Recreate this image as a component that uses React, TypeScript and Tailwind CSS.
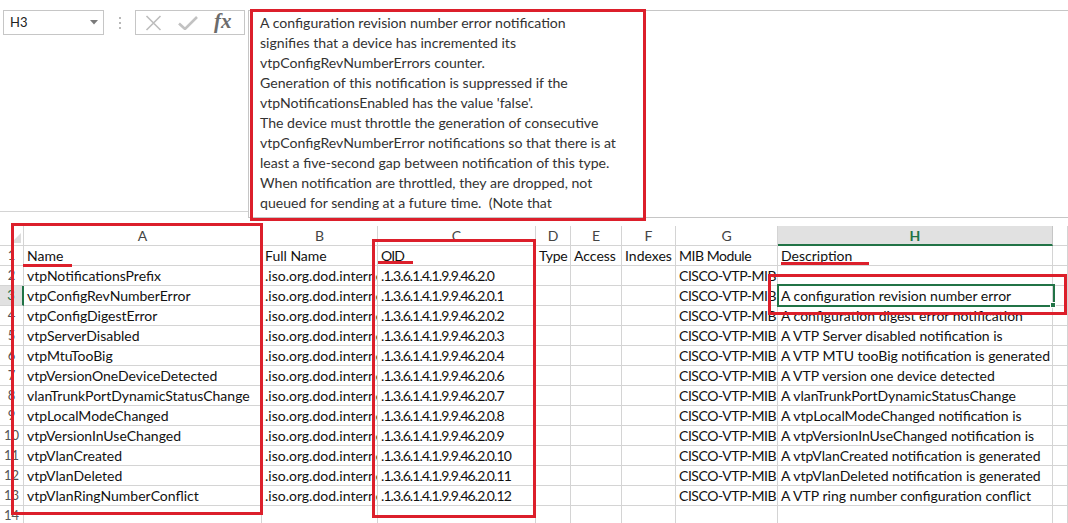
const font = "font-['Lato','Liberation_Sans',sans-serif]";

const cols = [
  { key: 'A', w: 'w-[238px]', extra: '' },
  { key: 'B', w: 'w-[116px]', extra: '' },
  { key: 'C', w: 'w-[158px]', extra: 'tracking-[-0.9px]' },
  { key: 'D', w: 'w-[35px]', extra: 'tracking-[-0.3px]' },
  { key: 'E', w: 'w-[51px]', extra: '' },
  { key: 'F', w: 'w-[54px]', extra: '' },
  { key: 'G', w: 'w-[102px]', extra: 'tracking-[-0.45px]' },
  { key: 'H', w: 'w-[275px]', extra: '' },
  { key: 'I', w: 'flex-1', extra: '' },
];

const header = ['Name', 'Full Name', 'OID', 'Type', 'Access', 'Indexes', 'MIB Module', 'Description', ''];

const data: [string, string, string][] = [
  ['vtpNotificationsPrefix', '.1.3.6.1.4.1.9.9.46.2.0', ''],
  ['vtpConfigRevNumberError', '.1.3.6.1.4.1.9.9.46.2.0.1', 'A configuration revision number error'],
  ['vtpConfigDigestError', '.1.3.6.1.4.1.9.9.46.2.0.2', 'A configuration digest error notification'],
  ['vtpServerDisabled', '.1.3.6.1.4.1.9.9.46.2.0.3', 'A VTP Server disabled notification is'],
  ['vtpMtuTooBig', '.1.3.6.1.4.1.9.9.46.2.0.4', 'A VTP MTU tooBig notification is generated'],
  ['vtpVersionOneDeviceDetected', '.1.3.6.1.4.1.9.9.46.2.0.6', 'A VTP version one device detected'],
  ['vlanTrunkPortDynamicStatusChange', '.1.3.6.1.4.1.9.9.46.2.0.7', 'A vlanTrunkPortDynamicStatusChange'],
  ['vtpLocalModeChanged', '.1.3.6.1.4.1.9.9.46.2.0.8', 'A vtpLocalModeChanged notification is'],
  ['vtpVersionInUseChanged', '.1.3.6.1.4.1.9.9.46.2.0.9', 'A vtpVersionInUseChanged notification is'],
  ['vtpVlanCreated', '.1.3.6.1.4.1.9.9.46.2.0.10', 'A vtpVlanCreated notification is generated'],
  ['vtpVlanDeleted', '.1.3.6.1.4.1.9.9.46.2.0.11', 'A vtpVlanDeleted notification is generated'],
  ['vtpVlanRingNumberConflict', '.1.3.6.1.4.1.9.9.46.2.0.12', 'A VTP ring number configuration conflict'],
];

const formulaLines = [
  'A configuration revision number error notification',
  'signifies that a device has incremented its',
  'vtpConfigRevNumberErrors counter.',
  'Generation of this notification is suppressed if the',
  "vtpNotificationsEnabled has the value 'false'.",
  'The device must throttle the generation of consecutive',
  'vtpConfigRevNumberError notifications so that there is at',
  'least a five-second gap between notification of this type.',
  'When notification are throttled, they are dropped, not',
  'queued for sending at a future time.  (Note that',
];

function Row({ num, cells }: { num: number; cells: string[] }) {
  const active = num === 3;
  return (
    <div className="flex h-[20px]">
      <div
        className={`w-[24px] shrink-0 flex items-center justify-center text-[13px] border-b border-[#d4d4d4] ${
          active
            ? 'bg-[#e1e1e1] text-[#217346] border-r-2 border-r-[#217346]'
            : 'bg-white text-[#555] border-r border-r-[#d4d4d4]'
        }`}
      >
        {num}
      </div>
      {cols.map((c, i) => (
        <div
          key={c.key}
          className={`${c.w} ${c.extra} shrink-0 h-full border-b border-r border-[#d4d4d4] overflow-hidden whitespace-nowrap pl-[3px] text-[14px] leading-[19px] text-[#111]`}
        >
          {cells[i] ?? ''}
        </div>
      ))}
    </div>
  );
}

export default function App() {
  return (
    <div className={`relative w-[1068px] h-[523px] overflow-hidden bg-white ${font}`}>
      {/* formula bar */}
      <div className="flex h-[218px]">
        <div className="w-[248px] shrink-0 h-[212px] border-b border-[#d4d4d4] pl-[3px] pt-[10px] flex items-start">
          <div className="w-[101px] h-[25px] border border-[#c6c6c6] flex items-center justify-between pl-[6px] pr-[5px] text-[13px] text-[#222]">
            <span>H3</span>
            <svg width="8" height="5" viewBox="0 0 8 5">
              <path d="M0 0 L8 0 L4 4.5 Z" fill="#7a7a7a" />
            </svg>
          </div>
          <div className="w-[31px] h-[25px] flex flex-col items-center justify-center gap-[3px]">
            <span className="w-[2px] h-[2px] bg-[#b8b8b8]" />
            <span className="w-[2px] h-[2px] bg-[#b8b8b8]" />
            <span className="w-[2px] h-[2px] bg-[#b8b8b8]" />
          </div>
          <div className="w-[110px] h-[25px] border border-[#c6c6c6] flex items-center pl-[9px] gap-[16px]">
            <svg width="17" height="16" viewBox="0 0 17 16">
              <path d="M1.5 1 L15.5 15 M15.5 1 L1.5 15" stroke="#bdbdbd" strokeWidth="1.6" fill="none" />
            </svg>
            <svg width="20" height="14" viewBox="0 0 20 14">
              <path d="M1 7.5 L7 13 L19 1" stroke="#c2c2c2" strokeWidth="2.6" fill="none" />
            </svg>
            <span className="font-['Liberation_Serif',serif] italic font-bold text-[21px] leading-none text-[#6b6b6b] -mt-[2px]">
              fx
            </span>
          </div>
        </div>
        <div className="flex-1 mt-[10px] h-[208px] border-l border-t border-b border-[#c6c6c6] pl-[11px] pt-[2px] text-[14.1px] leading-[20px] text-[#333] overflow-hidden">
          {formulaLines.map((l, i) => (
            <div key={i} className="whitespace-pre">
              {l}
            </div>
          ))}
        </div>
      </div>

      {/* grid */}
      <div className="mt-[8px]">
        <div className="flex h-[20px]">
          <div className="w-[24px] shrink-0 border-b border-r border-[#d4d4d4] relative bg-white">
            <svg className="absolute right-[2px] bottom-[2px]" width="10" height="10" viewBox="0 0 10 10">
              <path d="M10 0 L10 10 L0 10 Z" fill="#dcdcdc" />
            </svg>
          </div>
          {cols.map((c) =>
            c.key === 'H' ? (
              <div
                key={c.key}
                className={`${c.w} shrink-0 bg-[#e1e1e1] border-b-2 border-b-[#217346] border-r border-r-[#c6c6c6] flex items-center justify-center text-[14px] font-bold text-[#217346]`}
              >
                {c.key}
              </div>
            ) : (
              <div
                key={c.key}
                className={`${c.w} shrink-0 bg-white border-b border-r border-[#d4d4d4] flex items-center justify-center text-[14px] text-[#444]`}
              >
                {c.key === 'I' ? '' : c.key}
              </div>
            )
          )}
        </div>
        <Row num={1} cells={header} />
        {data.map((r, i) => (
          <Row
            key={i}
            num={i + 2}
            cells={[r[0], '.iso.org.dod.internet.private.enterprises', r[1], '', '', '', 'CISCO-VTP-MIB', r[2]]}
          />
        ))}
        <Row num={14} cells={[]} />
      </div>

      {/* selected cell H3 */}
      <div className="absolute left-[777px] top-[284px] w-[278px] h-[23px] border-2 border-[#217346] pointer-events-none" />
      <div className="absolute left-[1050px] top-[302px] w-[6px] h-[6px] bg-[#217346] border border-white" />

      {/* red annotations */}
      <div className="absolute left-[250px] top-[9px] w-[396px] h-[212px] border-[3px] border-[#dc1f2b]" />
      <div className="absolute left-[11px] top-[223px] w-[252px] h-[292px] border-[3px] border-[#dc1f2b]" />
      <div className="absolute left-[372px] top-[239px] w-[164px] h-[279px] border-[3px] border-[#dc1f2b]" />
      <div className="absolute left-[768px] top-[274px] w-[299px] h-[41px] border-[3px] border-[#dc1f2b]" />
      <div className="absolute left-[23px] top-[264px] w-[49px] h-[3px] bg-[#dc1f2b]" />
      <div className="absolute left-[378px] top-[261px] w-[35px] h-[3px] bg-[#dc1f2b]" />
      <div className="absolute left-[781px] top-[262px] w-[88px] h-[3px] bg-[#dc1f2b]" />
    </div>
  );
}
